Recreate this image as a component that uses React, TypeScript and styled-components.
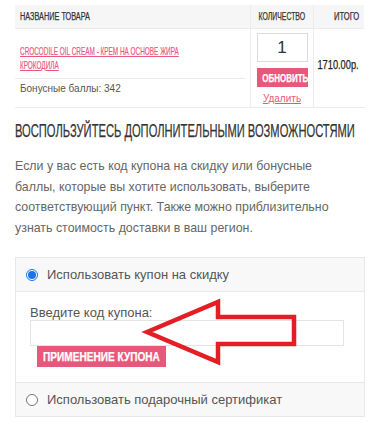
import React from "react";
import styled, { createGlobalStyle } from "styled-components";

const Global = createGlobalStyle`
  html, body { margin: 0; padding: 0; background: #fff; overflow-x: hidden; }
  body { font-family: "Liberation Sans", Arial, sans-serif; }
`;

const COND = `"Liberation Sans", Arial, sans-serif`;
const PINK = "#e8587a";
const LINE = "#ececec";

const Page = styled.div`
  padding: 5px 0 0 15px;
  width: 350px;
  overflow: hidden;
`;

/* condensed display text: real text, horizontally narrowed */
const Cond = styled.span<{ $s: number; $o?: string }>`
  display: inline-block;
  white-space: nowrap;
  font-family: ${COND};
  -webkit-text-stroke: 0.25px currentColor;
  transform: scaleX(${(p) => p.$s});
  transform-origin: ${(p) => p.$o || "left center"};
`;

const Table = styled.div`
  display: grid;
  grid-template-columns: 235px 63px 51px;
  border-bottom: 1px solid ${LINE};
`;

const HeadCell = styled.div<{ $align?: string; $border?: boolean }>`
  background: #f6f6f6;
  height: 24px;
  display: flex;
  align-items: center;
  justify-content: ${(p) => p.$align || "flex-start"};
  padding: 0 5px;
  font-size: 10px;
  color: #333;
  border-left: ${(p) => (p.$border ? `1px solid ${LINE}` : "none")};
  border-bottom: 1px solid ${LINE};
  box-sizing: border-box;
`;

const NameCell = styled.div`
  padding: 15px 5px 0 0;
  display: flex;
  flex-direction: column;
  height: 78px;
  box-sizing: border-box;
  overflow: hidden;
`;

const ProductLink = styled.a`
  display: block;
  width: 318px;
  margin-left: 5px;
  font-family: ${COND};
  font-size: 10.5px;
  line-height: 14px;
  height: 28px;
  color: ${PINK};
  text-transform: uppercase;
  text-decoration: underline;
  -webkit-text-stroke: 0.2px currentColor;
  transform: scaleX(0.61);
  transform-origin: left top;
`;

const Divider = styled.div`
  margin-top: 6px;
  border-bottom: 1px solid ${LINE};
`;

const Bonus = styled.div`
  font-size: 10px;
  line-height: 13px;
  color: #555;
  padding: 3px 0 0 5px;
`;

const QtyCell = styled.div`
  border-left: 1px solid ${LINE};
  display: flex;
  flex-direction: column;
  align-items: center;
  padding-top: 4px;
  box-sizing: border-box;
`;

const QtyInput = styled.div`
  width: 51px;
  height: 29px;
  border: 1px solid #dcdcdc;
  box-sizing: border-box;
  display: flex;
  align-items: center;
  justify-content: center;
  font-size: 17px;
  color: #333;
`;

const SmallButton = styled.div`
  margin-top: 6px;
  width: 51px;
  height: 19px;
  background: ${PINK};
  color: #fff;
  font-weight: bold;
  font-size: 10.5px;
  display: flex;
  align-items: center;
  justify-content: center;
  padding-left: 6px;
  box-sizing: border-box;
`;

const Remove = styled.a`
  margin-top: 6px;
  font-size: 10px;
  line-height: 12px;
  color: ${PINK};
  text-decoration: underline;
`;

const TotalCell = styled.div`
  border-left: 1px solid ${LINE};
  display: flex;
  align-items: center;
  justify-content: flex-end;
  padding: 0 5px 6px 0;
  font-size: 12.5px;
  color: #222;
`;

const Heading = styled.h2`
  margin: 13px 0 0 0;
  font-weight: normal;
  font-size: 18px;
  color: #333;
  line-height: 20px;
`;

const Para = styled.p`
  margin: 15px 0 0 0;
  font-size: 12.4px;
  line-height: 20.5px;
  color: #666;
  width: 340px;
`;

const Box = styled.div`
  margin-top: 19px;
  border: 1px solid #e8e8e8;
`;

const OptionRow = styled.label<{ $top?: boolean }>`
  display: flex;
  align-items: center;
  gap: 9px;
  height: 33px;
  padding-left: 10px;
  background: #f8f8f8;
  font-size: 13px;
  color: #555;
  border-${(p) => (p.$top ? "bottom" : "top")}: 1px solid #e8e8e8;
`;

const Radio = styled.span<{ $on?: boolean }>`
  width: 12px;
  height: 12px;
  border-radius: 50%;
  border: 1px solid ${(p) => (p.$on ? "#1a73e8" : "#777")};
  background: #fff;
  display: flex;
  align-items: center;
  justify-content: center;
  box-sizing: border-box;
  &::after {
    content: "";
    display: ${(p) => (p.$on ? "block" : "none")};
    width: 8px;
    height: 8px;
    border-radius: 50%;
    background: #1a73e8;
  }
`;

const CouponBody = styled.div`
  position: relative;
  padding: 13px 20px 0 14px;
  height: 90px;
  box-sizing: border-box;
`;

const FieldLabel = styled.div`
  font-size: 13px;
  color: #555;
  line-height: 15px;
`;

const CouponInput = styled.div`
  height: 26px;
  border: 1px solid #e4e4e4;
  box-sizing: border-box;
`;

const ApplyButton = styled.div`
  margin-left: 7px;
  width: 129px;
  height: 21px;
  background: ${PINK};
  color: #fff;
  font-weight: bold;
  font-size: 12px;
  display: flex;
  align-items: center;
  justify-content: center;
`;

const Arrow = styled.svg`
  position: absolute;
  left: 0;
  top: 0;
  overflow: visible;
  pointer-events: none;
`;

export default function App() {
  return (
    <>
      <Global />
      <Page>
        <Table>
          <HeadCell>
            <Cond $s={0.73}>НАЗВАНИЕ ТОВАРА</Cond>
          </HeadCell>
          <HeadCell $align="center" $border>
            <Cond $s={0.69} $o="center">КОЛИЧЕСТВО</Cond>
          </HeadCell>
          <HeadCell $align="flex-end" $border>
            <Cond $s={0.76} $o="right center">ИТОГО</Cond>
          </HeadCell>
          <NameCell>
            <ProductLink href="#">Crocodile oil cream - крем на основе жира крокодила</ProductLink>
            <Divider />
            <Bonus>Бонусные баллы: 342</Bonus>
          </NameCell>
          <QtyCell>
            <QtyInput>1</QtyInput>
            <SmallButton>
              <Cond $s={0.76} $o="center">ОБНОВИТЬ</Cond>
            </SmallButton>
            <Remove href="#">Удалить</Remove>
          </QtyCell>
          <TotalCell>
            <Cond $s={0.74} $o="right center">1710.00р.</Cond>
          </TotalCell>
        </Table>
        <Heading>
          <Cond $s={0.62}>ВОСПОЛЬЗУЙТЕСЬ ДОПОЛНИТЕЛЬНЫМИ ВОЗМОЖНОСТЯМИ</Cond>
        </Heading>
        <Para>
          Если у вас есть код купона на скидку или бонусные баллы, которые вы хотите использовать, выберите
          соответствующий пункт. Также можно приблизительно узнать стоимость доставки в ваш регион.
        </Para>
        <Box>
          <OptionRow $top>
            <Radio $on />
            Использовать купон на скидку
          </OptionRow>
          <CouponBody>
            <FieldLabel>Введите код купона:</FieldLabel>
            <CouponInput />
            <ApplyButton>
              <Cond $s={0.84} $o="center">ПРИМЕНЕНИЕ КУПОНА</Cond>
            </ApplyButton>
            <Arrow width="300" height="90" viewBox="0 0 300 90">
              <path
                d="M131 40 L202 10 L202 25 L278 25 L278 52 L202 52 L202 70 Z"
                fill="none"
                stroke="#e31e24"
                strokeWidth="4.5"
                strokeLinejoin="miter"
              />
            </Arrow>
          </CouponBody>
          <OptionRow>
            <Radio />
            Использовать подарочный сертификат
          </OptionRow>
        </Box>
      </Page>
    </>
  );
}
